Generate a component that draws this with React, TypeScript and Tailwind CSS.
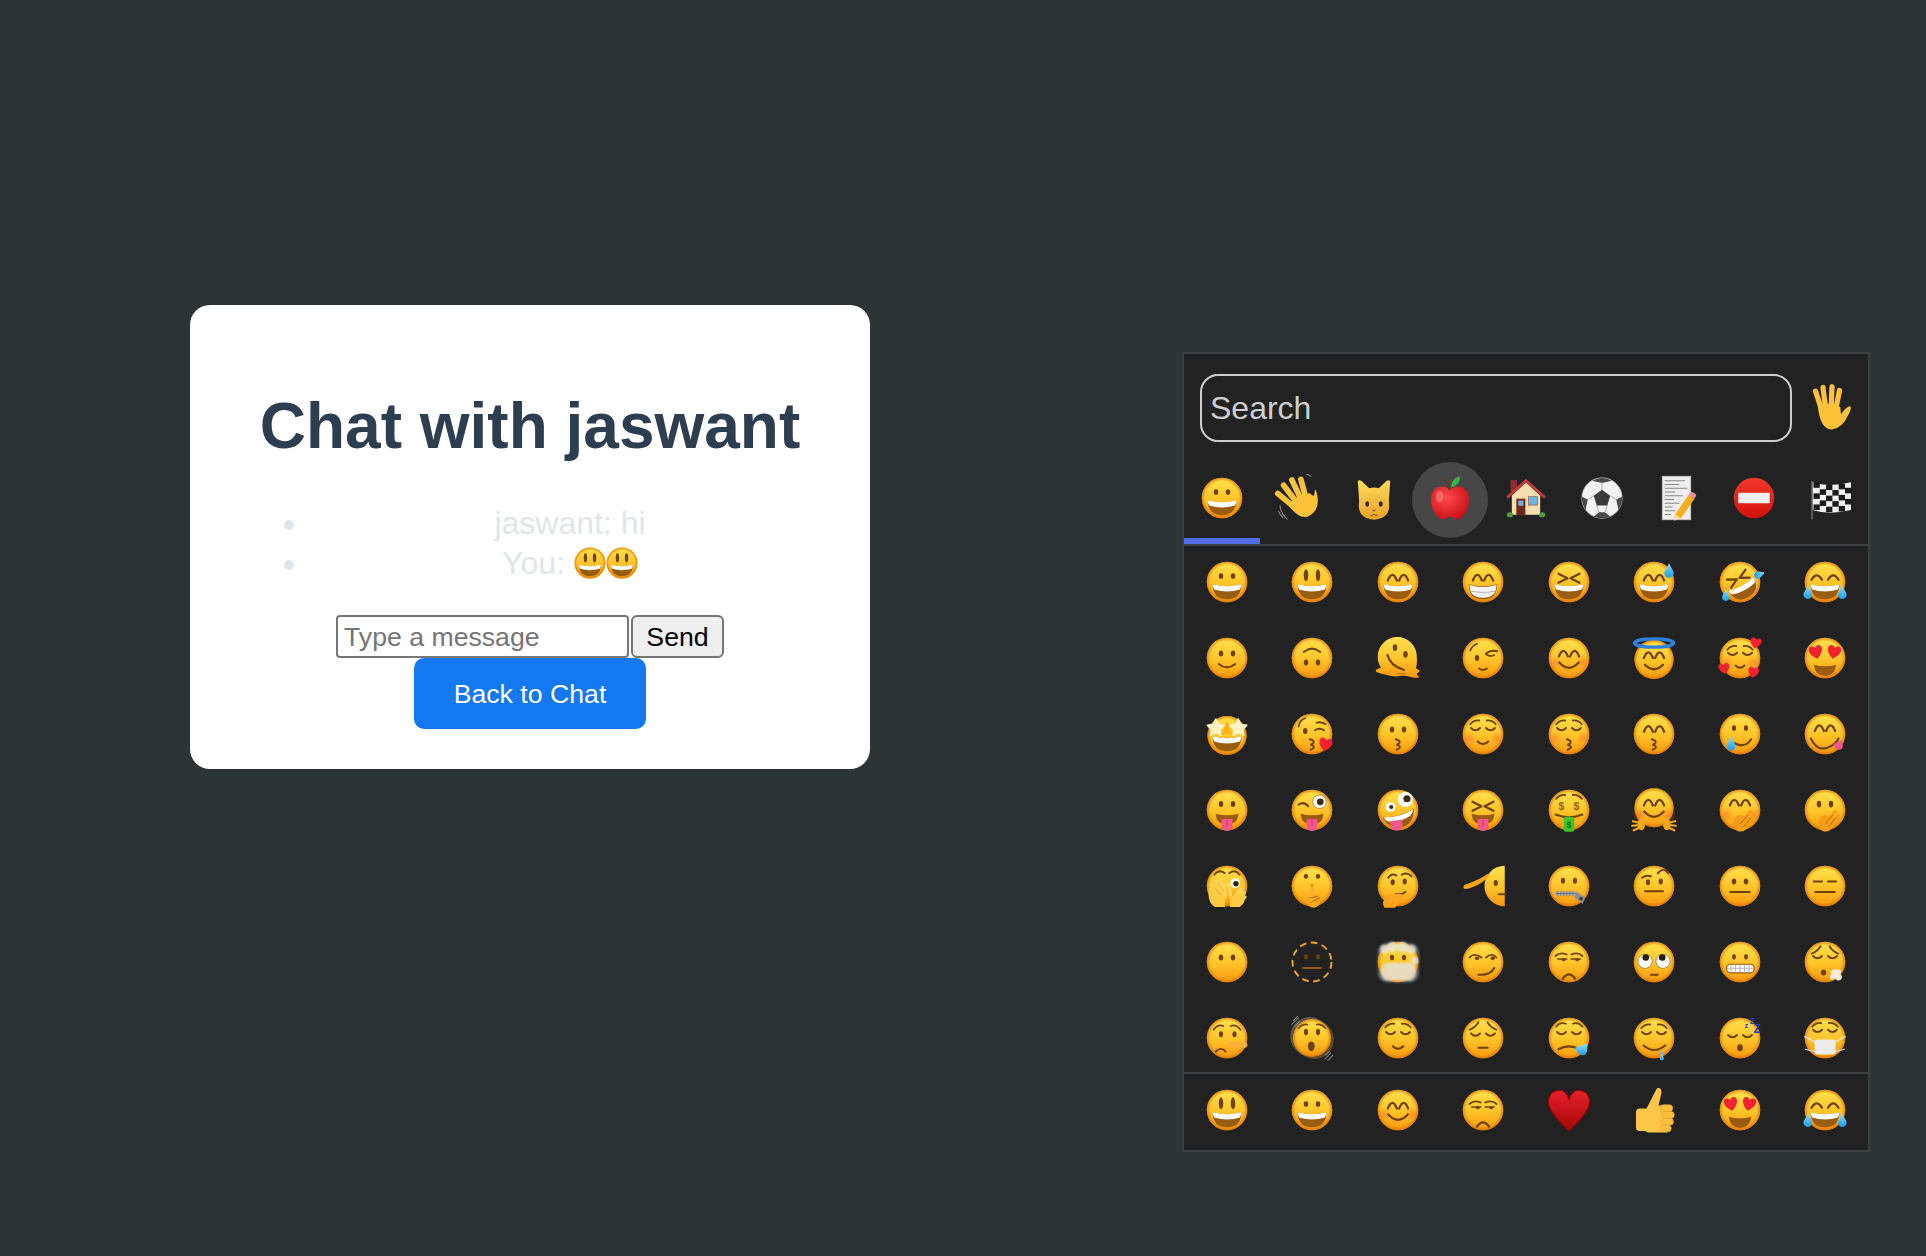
import type { ReactNode } from "react";

const B = "#6f4208";
const M = "#9a5c10";

const P = (d: string, w = 3, c = B) => (
  <path d={d} fill="none" stroke={c} strokeWidth={w} strokeLinecap="round" strokeLinejoin="round" />
);
const Fl = (d: string, c: string) => <path d={d} fill={c} />;
const Ov = (cx: number, cy: number, rx: number, ry: number, c = B) => <ellipse cx={cx} cy={cy} rx={rx} ry={ry} fill={c} />;

const faceAt = (cy: number, r: number) => (
  <>
    <circle cx="32" cy={cy} r={r} fill="url(#ef)" />
    <circle cx="32" cy={cy} r={r} fill="url(#er)" />
  </>
);
const face = faceAt(32, 27);
const eyes = (y = 26, ry = 4, rx = 3) => (
  <>
    {Ov(24, y, rx, ry)}
    {Ov(40, y, rx, ry)}
  </>
);
const arcs = (y = 30) => (
  <>
    {P(`M18.5 ${y}Q24.5 ${y - 15} 30.5 ${y}`)}
    {P(`M33.5 ${y}Q39.5 ${y - 15} 45.5 ${y}`)}
  </>
);
const closed = (y = 27) => (
  <>
    {P(`M16 ${y}Q22 ${y + 6} 28 ${y}`, 2.6)}
    {P(`M36 ${y}Q42 ${y + 6} 48 ${y}`, 2.6)}
  </>
);
const brows = (y = 15) => (
  <>
    {P(`M15 ${y + 4}Q20 ${y - 2} 27 ${y - 1}`, 2.4)}
    {P(`M49 ${y + 4}Q44 ${y - 2} 37 ${y - 1}`, 2.4)}
  </>
);
const sadBrows = (
  <>
    {P("M14 21Q22 18 26 11", 2.4)}
    {P("M50 21Q42 18 38 11", 2.4)}
  </>
);
const xeyes = (
  <>
    {P("M18 21L30 27L18 33", 3)}
    {P("M46 21L34 27L46 33", 3)}
  </>
);
const open = (
  <>
    {Fl("M13 35Q32 40 51 35Q51 55 32 55Q13 55 13 35Z", M)}
    {Fl("M13 35Q32 40 51 35Q51 40 49 42Q32 47 15 42Q13 40 13 35Z", "#fff")}
  </>
);
const smile = P("M19 38Q32 52 45 38", 3);
const line = P("M19 40H45", 2.8);
const kiss = P("M29 39Q37 41 33 45Q29 46 32 47Q38 50 30 53", 2.6);
const Drop = (x: number, y: number, s = 1) => (
  <path d={`M${x} ${y - 10 * s}C${x + 3 * s} ${y - 3 * s} ${x + 6 * s} ${y} ${x + 6 * s} ${y + 3 * s}A${6 * s} ${6 * s} 0 0 1 ${x - 6 * s} ${y + 3 * s}C${x - 6 * s} ${y} ${x - 3 * s} ${y - 3 * s} ${x} ${y - 10 * s}Z`} fill="url(#ed)" />
);
const Ht = (x: number, y: number, s = 1, r = 0, c = "#f1222f") => (
  <path transform={`translate(${x} ${y}) rotate(${r}) scale(${s})`} d="M0 6.5C-9 0 -6.8 -6 -3 -6C-1.4 -6 -.5 -5 0 -3.8C.5 -5 1.4 -6 3 -6C6.8 -6 9 0 0 6.5Z" fill={c} />
);
const blush = (
  <>
    <circle cx="13" cy="38" r="10" fill="url(#eb)" />
    <circle cx="51" cy="38" r="10" fill="url(#eb)" />
  </>
);
const tongue = (
  <>
    {Fl("M17 37Q32 41 47 37Q47 51 32 51Q17 51 17 37Z", M)}
    {Fl("M25 44H39V53A7 7 0 0 1 25 53Z", "#f2568f")}
    {P("M32 45V53", 1.2, "#c92f68")}
  </>
);
const wrist = "#f9a61e";
const fingers = (pts: number[][], w = 5, c = wrist) => (
  <g stroke={c} strokeWidth={w} strokeLinecap="round">
    {pts.map((p, i) => (
      <line key={i} x1={p[0]} y1={p[1]} x2={p[2]} y2={p[3]} />
    ))}
  </g>
);
const star = (cx: number, cy: number, r: number) => {
  const pts: string[] = [];
  for (let i = 0; i < 10; i++) {
    const a = (Math.PI / 5) * i - Math.PI / 2;
    const rr = i % 2 ? r * 0.5 : r;
    pts.push(`${(cx + rr * Math.cos(a)).toFixed(1)},${(cy + rr * Math.sin(a)).toFixed(1)}`);
  }
  return <polygon points={pts.join(" ")} fill="#fff3c4" stroke="#fff3c4" strokeWidth="2" strokeLinejoin="round" />;
};

const handFingers = (
  <>
    {fingers([[20, 36, 11, 14], [27, 32, 23, 8], [35, 32, 36, 7], [42, 34, 47, 12]], 7.5, "#ffc23a")}
    <path d="M16 34Q32 26 49 34Q51 44 56 34Q60 30 56 42Q50 60 34 60Q20 60 16 34Z" fill="#ffc23a" />
  </>
);

const flagCells: ReactNode[] = [];
for (let c = 0; c < 6; c++) {
  for (let r = 0; r < 5; r++) {
    if ((c + r) % 2 === 0) {
      const off = c === 0 || c === 5 ? 0 : c === 1 || c === 4 ? 2 : 3;
      flagCells.push(<rect key={`${c}-${r}`} x={10 + c * 8.4} y={11 + off + r * 7.4} width="8.4" height="7.4" />);
    }
  }
}

const EMOJI: Record<string, ReactNode> = {
  grin: <>{face}{eyes(24, 3.8, 3)}{open}</>,
  smiley: <>{face}{eyes(23, 8, 3)}{open}</>,
  smile4: <>{face}{arcs()}{open}</>,
  beam: (
    <>
      {face}
      {arcs()}
      {Fl("M13 35Q32 40 51 35Q51 55 32 55Q13 55 13 35Z", M)}
      {Fl("M14 36Q32 41 50 36Q50 53 32 53Q14 53 14 36Z", "#f4f4f4")}
      {P("M15 44Q32 48 49 44", 1.2, "#a8a8a8")}
    </>
  ),
  laugh: <>{face}{xeyes}{open}</>,
  sweat: <>{face}{arcs()}{open}{Drop(52, 17, 1.05)}</>,
  rofl: (
    <>
      {face}
      <g transform="rotate(-28 32 32)">
        {xeyes}
        {open}
      </g>
      {Drop(13, 50, 0.8)}
      <g transform="rotate(70 58 22)">{Drop(58, 22, 0.8)}</g>
    </>
  ),
  joy: <>{face}{P("M14 29Q21 17 28 29")}{P("M36 29Q43 17 50 29")}{open}{Drop(9, 46, 0.95)}{Drop(55, 46, 0.95)}</>,
  slight: <>{face}{eyes()}{P("M21 40Q32 49 43 40", 2.6)}</>,
  upside: (
    <>
      {face}
      <g transform="rotate(180 32 32)">
        {eyes()}
        {P("M21 40Q32 49 43 40", 2.6)}
      </g>
    </>
  ),
  melt: (
    <>
      <path d="M5 30A26 26 0 0 1 57 30C58 40 56 44 56 46C62 48 62 50 58 52C56 54 60 56 60 58C50 60 46 54 34 56C26 58 14 54 4 51C0 48 4 47 9 45C7 40 5 38 5 30Z" fill="url(#ef)" />
      {Ov(28, 18, 3, 4.5)}
      {Ov(42, 27, 3, 4.5)}
      {P("M18 28Q21 42 40 48", 3)}
      {P("M32 53H42", 1.2, "#a86a10")}
    </>
  ),
  wink: (
    <>
      {face}
      {P("M15 22Q18 15 24 13", 2.4)}
      {Ov(24, 32, 3, 4)}
      {P("M36 26Q43 21 51 23", 2.8)}
      {P("M36 27Q42 31 47 28", 2.2)}
      {P("M27 46Q32 50 37 46", 2.8)}
    </>
  ),
  blush: <>{face}{blush}{arcs(30)}{smile}</>,
  halo: (
    <>
      {faceAt(34, 26)}
      {arcs(32)}
      {P("M20 41Q32 53 44 41", 3)}
      <ellipse cx="32" cy="12" rx="26" ry="5.5" fill="none" stroke="#2f7fe0" strokeWidth="4.6" />
    </>
  ),
  hearts: (
    <>
      {face}
      {blush}
      {brows(17)}
      {closed(25)}
      {P("M26 42Q32 48 38 42", 2.6)}
      {Ht(53, 12, 1.15, 12)}
      {Ht(11, 46, 1.15, -10)}
      {Ht(50, 51, 1.15, 10)}
    </>
  ),
  hearteyes: (
    <>
      {face}
      {Fl("M17 41Q32 45 47 41Q45 56 32 56Q19 56 17 41Z", M)}
      {Ht(20, 24, 1.4, -12)}
      {Ht(44, 24, 1.4, 12)}
    </>
  ),
  star: (
    <>
      {faceAt(34, 26)}
      {open}
      {star(17, 24, 12)}
      {star(47, 24, 12)}
      {Fl("M32 15C28 24 28 28 23 33C32 31 41 33 41 33C36 28 36 24 32 15Z", "#f7b21a")}
    </>
  ),
  kissheart: (
    <>
      {face}
      {P("M14 22Q16 13 23 11", 2.4)}
      {Ov(23, 28, 3, 4)}
      {P("M36 27Q42 23 48 27", 2.6)}
      {P("M38 17Q44 15 50 19", 2.4)}
      {kiss}
      {Ht(50, 46, 1.4, 12)}
    </>
  ),
  kiss: <>{face}{eyes(26, 4, 3)}{kiss}</>,
  relaxed: (
    <>
      {face}
      {blush}
      {brows(15)}
      {closed(24)}
      {P("M25 42Q32 49 39 42", 2.8)}
    </>
  ),
  kissclosed: <>{face}{blush}{brows(15)}{closed(24)}{kiss}</>,
  kissarc: <>{face}{arcs(29)}{kiss}</>,
  tearsmile: (
    <>
      {face}
      {eyes(24, 3.8, 2.8)}
      {P("M24 44Q38 52 47 39", 2.8)}
      {Drop(20, 45, 1)}
    </>
  ),
  yum: (
    <>
      {face}
      {arcs(28)}
      {P("M13 38Q22 56 36 50Q46 46 50 38", 2.8)}
      {Fl("M43 46L53 40Q58 46 54 52Q47 56 43 46Z", "#f2568f")}
    </>
  ),
  tongue: <>{face}{eyes(24)}{tongue}</>,
  tonguewink: (
    <>
      {face}
      {P("M14 25Q21 20 27 27", 2.8)}
      <circle cx="42" cy="21" r="9" fill="#fff" stroke="#b58d4a" strokeWidth="1.2" />
      <circle cx="43" cy="21" r="4.5" fill="#3a2a14" />
      {tongue}
    </>
  ),
  zany: (
    <>
      {face}
      <circle cx="22" cy="28" r="6.5" fill="#fff" />
      <circle cx="23" cy="28" r="2.8" fill="#3a2a14" />
      <circle cx="42" cy="18" r="10" fill="#fff" />
      <circle cx="44" cy="17" r="4.8" fill="#3a2a14" />
      {Fl("M11 42Q36 42 53 30Q54 48 40 54Q22 60 11 42Z", M)}
      {Fl("M13 42Q36 42 52 31Q52 36 48 40Q32 50 18 47Q14 45 13 42Z", "#fff")}
      {Fl("M21 47L37 45L38 53A8 8 0 0 1 23 55Z", "#f2568f")}
    </>
  ),
  xtongue: <>{face}{xeyes}{tongue}</>,
  money: (
    <>
      {face}
      {brows(13)}
      <text x="22" y="32" fontSize="14" fontWeight="700" textAnchor="middle" fill="#8f6410" fontFamily="Liberation Sans, sans-serif">$</text>
      <text x="42" y="32" fontSize="14" fontWeight="700" textAnchor="middle" fill="#8f6410" fontFamily="Liberation Sans, sans-serif">$</text>
      {P("M14 38Q32 45 50 38", 2.6)}
      <rect x="25" y="41" width="14" height="20" rx="3" fill="#3cc62c" />
      <text x="32" y="56" fontSize="12" fontWeight="700" textAnchor="middle" fill="#0d6d12" fontFamily="Liberation Sans, sans-serif">$</text>
    </>
  ),
  hug: (
    <>
      {faceAt(29, 26)}
      {blush}
      {arcs(26)}
      {P("M19 34Q32 48 45 34", 3)}
      {fingers([[12, 49, 4, 47], [13, 52, 3, 53], [14, 55, 5, 59]], 3, "#f6a81d")}
      {fingers([[52, 49, 60, 47], [51, 52, 61, 53], [50, 55, 59, 59]], 3, "#f6a81d")}
      <ellipse cx="15" cy="51" rx="5" ry="8" fill="#f6a81d" />
      <ellipse cx="49" cy="51" rx="5" ry="8" fill="#f6a81d" />
    </>
  ),
  handmouth: (
    <>
      {face}
      {blush}
      {arcs(26)}
      {fingers([[28, 56, 46, 34], [32, 57, 50, 39], [36, 58, 52, 44]], 4.4, "#f59c18")}
      <ellipse cx="32" cy="50" rx="9" ry="11" fill="#f59c18" />
      {P("M42 39L33 50M46 43L37 54", 1.2, "#b5680a")}
    </>
  ),
  handmouth2: (
    <>
      {face}
      {eyes(24, 4.5, 3)}
      {fingers([[28, 56, 46, 34], [32, 57, 50, 39], [36, 58, 52, 44]], 4.4, "#f59c18")}
      <ellipse cx="32" cy="50" rx="9" ry="11" fill="#f59c18" />
      {P("M42 39L33 50M46 43L37 54", 1.2, "#b5680a")}
    </>
  ),
  peek: (
    <>
      {face}
      {P("M15 17Q22 9 29 15M35 15Q42 9 49 17", 2.4)}
      <circle cx="43" cy="28" r="6.5" fill="#fff" />
      <circle cx="44" cy="29" r="3.6" fill="#2d2010" />
      {fingers([[27, 46, 11, 30], [29, 44, 17, 25], [30, 44, 23, 24], [30, 46, 28, 30]], 4.4, "#ffd75a")}
      {fingers([[37, 46, 34, 30], [39, 47, 53, 35], [41, 49, 55, 41], [40, 51, 56, 47]], 4.4, "#ffd75a")}
      <path d="M8 34Q20 36 30 46L29 60H16Q5 54 8 34Z" fill="#ffcb45" />
      <path d="M56 42Q44 40 36 46L36 60H49Q58 54 56 42Z" fill="#ffcb45" />
      {P("M14 33L24 43M20 28L28 40M44 40L38 46", 1, "#d89318")}
    </>
  ),
  shush: (
    <>
      {face}
      {eyes(19, 3.4, 2.8)}
      <ellipse cx="34" cy="52" rx="9" ry="9" fill="#f7a51d" />
      {fingers([[32, 54, 32, 34]], 6, "#f9b02a")}
      {P("M29 48L39 46M30 54L42 48", 1.2, "#b5680a")}
      {P("M32 30V32", 1.2, "#8a4a0c")}
    </>
  ),
  think: (
    <>
      {face}
      {P("M19 21Q23 14 30 18", 2.6)}
      {P("M37 17Q44 13 50 19", 2.6)}
      {Ov(25, 27, 2.8, 4)}
      {Ov(41, 26, 2.8, 4)}
      {P("M29 43Q37 44 42 40", 2.8)}
      <path d="M14 61Q10 54 14 50L19 45Q34 40 38 44Q40 47 35 49L28 50Q36 51 33 54L28 61Z" fill="#f9a61e" />
    </>
  ),
  salute: (
    <>
      <path d="M61 5A27 27 0 0 0 61 59Z" fill="url(#ef)" />
      {Ov(49, 28, 2.8, 4)}
      {P("M53 43H61", 2.8)}
      <path d="M6 35Q5 30 12 29Q28 23 38 16L41 18Q32 29 14 35Q8 37 6 35Z" fill="#f7a51d" />
    </>
  ),
  zip: (
    <>
      {face}
      {eyes(25, 4, 2.8)}
      {P("M15 42H42", 5.5, "#a9a9a9")}
      {P("M15 42H42", 1, "#6a6a6a")}
      {P("M17 39V45M21 39V45M25 39V45M29 39V45M33 39V45M37 39V45", 0.9, "#6a6a6a")}
      <path d="M42 40L54 47L50 56L39 47Z" fill="#8d8d8d" />
      <circle cx="48" cy="49" r="2.2" fill="#333" />
    </>
  ),
  raised: (
    <>
      {face}
      {P("M16 21Q21 17 28 19", 2.6)}
      {P("M37 15Q45 6 51 15", 2.6)}
      {Ov(24, 27, 2.8, 4)}
      {Ov(41, 26, 2.8, 4)}
      {P("M20 39H44", 2.6)}
    </>
  ),
  neutral: <>{face}{eyes()}{line}</>,
  flat: (
    <>
      {face}
      {P("M17 26H28M36 26H47", 2.6)}
      {line}
    </>
  ),
  nomouth: <>{face}{eyes()}</>,
  dotted: (
    <>
      <circle cx="32" cy="32" r="26" fill="none" stroke="#e8a52a" strokeWidth="2.6" strokeDasharray="9 6" />
      {eyes(25, 3.6, 2.6)}
      {P("M20 40H44", 2, "#b56d12")}
    </>
  ),
  cloud: (
    <>
      <rect x="5" y="7" width="55" height="52" rx="12" fill="#8f979c" opacity="0.55" filter="url(#ez)" />
      {face}
      <g filter="url(#ey)" fill="#e4e6e2" opacity="0.82">
        <circle cx="14" cy="15" r="6" />
        <circle cx="24" cy="12" r="7" />
        <circle cx="38" cy="12" r="7" />
        <circle cx="50" cy="15" r="6" />
        <rect x="9" y="33" width="47" height="24" rx="10" />
        <circle cx="54" cy="30" r="5" />
      </g>
      {eyes(26, 3.6, 2.8)}
    </>
  ),
  smirk: (
    <>
      {face}
      {P("M14 26Q20 19 30 26", 2.4)}
      {P("M36 26Q44 19 50 26", 2.4)}
      {Ov(24, 27, 3, 2.4)}
      {Ov(45, 27, 3, 2.4)}
      {P("M26 49Q42 50 47 40", 2.8)}
    </>
  ),
  unamused: (
    <>
      {face}
      {P("M14 24Q20 18 29 22", 2.4)}
      {P("M35 22Q44 18 50 24", 2.4)}
      {P("M17 28H29", 2.2)}
      {P("M35 28H47", 2.2)}
      {Ov(25, 29, 2.6, 2)}
      {Ov(43, 29, 2.6, 2)}
      {P("M24 54Q32 43 40 54", 3)}
    </>
  ),
  roll: (
    <>
      {face}
      <circle cx="20" cy="31" r="9.5" fill="#fff" stroke="#9a6a1e" strokeWidth="1" />
      <circle cx="44" cy="31" r="9.5" fill="#fff" stroke="#9a6a1e" strokeWidth="1" />
      <circle cx="21" cy="26" r="4.4" fill="#2a1e10" />
      <circle cx="43" cy="26" r="4.4" fill="#2a1e10" />
      {P("M28 49H37", 2.6)}
    </>
  ),
  grimace: (
    <>
      {face}
      {eyes(25, 3.6, 2.6)}
      <rect x="14" y="35" width="37" height="11.5" rx="5.5" fill="#f4f4f4" stroke={M} strokeWidth="1.6" />
      {P("M15 40.5H50M20 36V46M26 36V46M32 36V46M38 36V46M44 36V46", 0.8, "#a0a0a0")}
    </>
  ),
  exhale: (
    <>
      {face}
      {sadBrows}
      {closed(24)}
      {Ov(30, 46, 3.5, 4)}
      <g fill="#f5ead2">
        <circle cx="45" cy="47" r="5.5" />
        <circle cx="50" cy="52" r="4.5" />
        <circle cx="42" cy="52" r="3.5" />
        <circle cx="50" cy="45" r="3.5" />
      </g>
    </>
  ),
  lying: (
    <>
      {face}
      {P("M14 21Q20 13 27 16", 2.4)}
      {P("M37 16Q44 13 50 21", 2.4)}
      {Ov(24, 27, 2.8, 4)}
      {Ov(42, 27, 2.8, 4)}
      {P("M17 50Q24 43 30 50", 2.6)}
      <path d="M34 37L57 38Q62 41 57 45L36 45Q30 41 34 37Z" fill="#f9b03a" />
    </>
  ),
  shake: (
    <>
      <circle cx="29" cy="30" r="26" fill="#8a7b55" opacity="0.6" />
      <circle cx="35" cy="34" r="26" fill="#8a6a2a" opacity="0.6" />
      {faceAt(32, 25)}
      {eyes(24, 4.2, 2.8)}
      {P("M14 19Q19 13 26 14M38 14Q45 13 50 19", 2.2)}
      {Ov(31, 43, 4.6, 6.5)}
      {P("M7 9L13 3M5 14L14 5M9 17L15 10", 1.4, "#8c8c8c")}
      {P("M49 60L57 52M53 62L60 55M50 55L55 50", 1.4, "#8c8c8c")}
    </>
  ),
  relieved: (
    <>
      {face}
      {brows(14)}
      {closed(24)}
      {P("M25 43Q32 50 39 43", 2.8)}
    </>
  ),
  pensive: (
    <>
      {face}
      {sadBrows}
      {closed(26)}
      {P("M26 45H38", 2.8)}
    </>
  ),
  sleepy: (
    <>
      {face}
      {P("M15 17Q20 10 28 13M37 13Q44 10 50 17", 2.2)}
      {closed(24)}
      {P("M18 47Q30 40 44 46", 3)}
      <path d="M40 45Q50 41 56 40Q58 52 52 55Q44 56 40 45Z" fill="url(#ed)" />
    </>
  ),
  drool: (
    <>
      {face}
      {brows(15)}
      {closed(24)}
      {P("M18 42Q32 54 47 42", 2.8)}
      {Fl("M41 50H44V60H41Z", "#5ac6ef")}
      {Drop(42.5, 58, 0.45)}
    </>
  ),
  sleep: (
    <>
      {face}
      {closed(28)}
      {Ov(32, 45, 3.8, 4.6)}
      <text x="38" y="18" fontSize="10" fontWeight="700" fill="#1d45c8" fontFamily="Liberation Sans, sans-serif">z</text>
      <text x="45" y="13" fontSize="11" fontWeight="700" fill="#1d45c8" fontFamily="Liberation Sans, sans-serif">Z</text>
      <text x="50" y="25" fontSize="16" fontWeight="700" fill="#1d45c8" fontFamily="Liberation Sans, sans-serif">Z</text>
    </>
  ),
  mask: (
    <>
      {face}
      {brows(13)}
      {closed(21)}
      <path d="M21 34H43Q46 34 46 37V51Q46 54 43 54H21Q18 54 18 51V37Q18 34 21 34Z" fill="#ececec" />
      {P("M18 37L5 30M18 50L6 47M46 37L59 30M46 50L58 47", 1.6, "#eeeeee")}
    </>
  ),
  heart: (
    <>
      <path d="M32 60C4 34 2 22 6 14C9 6 22 3 27 9C29 11 31 14 32 18C33 14 35 11 37 9C42 3 55 6 58 14C62 22 60 34 32 60Z" fill="url(#eh)" stroke="#8a0505" strokeWidth="1.4" />
    </>
  ),
  thumbs: (
    <>
      <path d="M13 30H22V60H13Q8 60 8 55V35Q8 30 13 30Z" fill="#ffc74a" />
      <path d="M22 30L36 3Q42 1 42 9L38 26H50V62H25Q20 62 20 56V32Z" fill="#ffc74a" />
      <rect x="40" y="25" width="17" height="9" rx="4.5" fill="#ffbf3a" stroke="#e8a02a" strokeWidth="0.8" />
      <rect x="42" y="34" width="17" height="9" rx="4.5" fill="#ffbf3a" stroke="#e8a02a" strokeWidth="0.8" />
      <rect x="42" y="43" width="16" height="9" rx="4.5" fill="#ffbf3a" stroke="#e8a02a" strokeWidth="0.8" />
      <rect x="40" y="52" width="15" height="9" rx="4.5" fill="#ffbf3a" stroke="#e8a02a" strokeWidth="0.8" />
    </>
  ),
  wave: (
    <g transform="rotate(-28 32 32)">
      {handFingers}
      {P("M6 30Q2 40 6 50M1 36Q0 40 2 46", 1.4, "#8c8c8c")}
      {P("M52 5Q58 8 60 14", 1.4, "#8c8c8c")}
    </g>
  ),
  hand: (
    <>
      {fingers([[21, 32, 14, 11], [27, 30, 24, 6], [35, 30, 36, 5], [42, 30, 46, 10]], 7, "#ffc23a")}
      <path d="M17 30Q31 24 47 32L48 42Q54 32 60 31Q63 33 58 42Q50 60 36 62Q20 62 17 30Z" fill="#ffc23a" />
    </>
  ),
  cat: (
    <g transform="translate(32 2) scale(0.9 0.95) translate(-32 0)">
      <path d="M10 36L8 8Q10 5 14 8L25 18Q32 16 39 18L50 8Q54 5 56 8L54 36Q58 60 32 62Q6 60 10 36Z" fill="url(#ec)" />
      {Ov(22, 40, 3, 3.8, "#3a2a14")}
      {Ov(42, 40, 3, 3.8, "#3a2a14")}
      {Fl("M29 48H35L32 51Z", "#8a4a2a")}
      {P("M27 56Q30 57 32 54Q34 57 37 56", 1.2, "#5a3208")}
    </g>
  ),
  apple: (
    <>
      <path d="M32 21C26 14 8 14 7 32C6 48 16 62 24 60C28 59 30 57 32 57C34 57 36 59 40 60C48 62 58 48 57 32C56 14 38 14 32 21Z" fill="url(#ea)" />
      {P("M31 21Q30 12 25 8", 2, "#6b3a12")}
      <path d="M33 18Q34 6 45 3Q47 14 33 18Z" fill="#39b54a" />
      <ellipse cx="18" cy="30" rx="5" ry="8" fill="#fff" opacity="0.22" />
    </>
  ),
  house: (
    <g transform="translate(32 32) scale(0.86) translate(-32 -32)">
      <rect x="8" y="4" width="10" height="18" fill="#8e2f2f" />
      <path d="M10 58V28L32 8L54 28V58Z" fill="#f5deb0" />
      {P("M4 30L32 5L60 30", 4.4, "#c4393a")}
      <rect x="17" y="33" width="14" height="26" fill="#6b2a1e" />
      <rect x="20" y="36" width="8" height="8" fill="#6fb4dc" />
      <rect x="36" y="30" width="14" height="13" fill="#6fb4dc" stroke="#8f6f4a" strokeWidth="1.2" />
      <ellipse cx="7" cy="58" rx="5" ry="4" fill="#4f9a3a" />
      <ellipse cx="57" cy="58" rx="5" ry="4" fill="#4f9a3a" />
    </g>
  ),
  ball: (
    <>
      <circle cx="32" cy="32" r="27" fill="#f2f2f2" stroke="#a9a9a9" strokeWidth="1" />
      <path d="M32 21L43 29L39 42H25L21 29Z" fill="#3a3a3a" />
      <path d="M32 5Q24 6 19 9L32 12L45 9Q40 6 32 5ZM5 30Q5 40 10 48L13 34ZM59 30Q59 40 54 48L51 34ZM21 57Q32 61 43 57L36 51H28Z" fill="#4a4a4a" />
      {P("M32 12V21M21 29L13 34M43 29L51 34M25 42L28 51M39 42L36 51", 1, "#9a9a9a")}
    </>
  ),
  memo: (
    <>
      <rect x="11" y="3" width="38" height="58" fill="#eeeeee" stroke="#c8c8c8" strokeWidth="1" />
      {P("M15 9H41M15 14H33M15 19H44M15 24H28M15 29H38M15 34H26M15 39H33M15 44H24M15 49H28M15 54H22", 0.9, "#555")}
      <path d="M28 54L46 28L54 33L36 59L27 62Z" fill="#f6b01e" />
      <path d="M46 28L48 25Q50 23 53 25L56 27Q57 29 55 31L54 33Z" fill="#ec8f9b" />
      <path d="M28 54L27 62L36 59Z" fill="#f7dcb0" />
    </>
  ),
  noentry: (
    <>
      <circle cx="32" cy="32" r="27" fill="url(#en)" />
      <rect x="11" y="25" width="42" height="14" rx="1" fill="#f0f0f0" />
    </>
  ),
  flag: (
    <>
      {P("M8 10V60", 1.4, "#8a8a8a")}
      <path d="M9 11Q30 18 60 11V48Q30 55 9 48Z" fill="#f1f1f1" />
      <g fill="#1b1b1b">{flagCells}</g>
    </>
  ),
};

const GRID = [
  "grin", "smiley", "smile4", "beam", "laugh", "sweat", "rofl", "joy",
  "slight", "upside", "melt", "wink", "blush", "halo", "hearts", "hearteyes",
  "star", "kissheart", "kiss", "relaxed", "kissclosed", "kissarc", "tearsmile", "yum",
  "tongue", "tonguewink", "zany", "xtongue", "money", "hug", "handmouth", "handmouth2",
  "peek", "shush", "think", "salute", "zip", "raised", "neutral", "flat",
  "nomouth", "dotted", "cloud", "smirk", "unamused", "roll", "grimace", "exhale",
  "lying", "shake", "relieved", "pensive", "sleepy", "drool", "sleep", "mask",
];
const CATS = ["grin", "wave", "cat", "apple", "house", "ball", "memo", "noentry", "flag"];
const RECENT = ["smiley", "grin", "blush", "unamused", "heart", "thumbs", "hearteyes", "joy"];

function Emoji({ name }: { name: string }) {
  return (
    <svg viewBox="0 0 64 64" className="block w-[48px] h-[48px]">
      {EMOJI[name]}
    </svg>
  );
}

function InlineEmoji({ name }: { name: string }) {
  return (
    <svg viewBox="4 4 56 56" className="inline-block align-[-5px] w-[32px] h-[32px]">
      {EMOJI[name]}
    </svg>
  );
}

function Defs() {
  return (
    <svg className="absolute w-0 h-0" aria-hidden="true">
      <defs>
        <linearGradient id="ef" x1="0" y1="0" x2="0" y2="1">
          <stop offset="0" stopColor="#ffe24f" />
          <stop offset="0.55" stopColor="#ffc328" />
          <stop offset="1" stopColor="#f7960f" />
        </linearGradient>
        <radialGradient id="er">
          <stop offset="0.82" stopColor="#e07a00" stopOpacity="0" />
          <stop offset="1" stopColor="#d96f00" stopOpacity="0.75" />
        </radialGradient>
        <linearGradient id="ec" x1="0" y1="0" x2="0" y2="1">
          <stop offset="0" stopColor="#ffd95a" />
          <stop offset="1" stopColor="#e9a52a" />
        </linearGradient>
        <linearGradient id="ed" x1="0" y1="0" x2="0" y2="1">
          <stop offset="0" stopColor="#8fe0fa" />
          <stop offset="1" stopColor="#1d9be8" />
        </linearGradient>
        <radialGradient id="eb">
          <stop offset="0" stopColor="#ff6a2e" stopOpacity="0.5" />
          <stop offset="1" stopColor="#ff6a2e" stopOpacity="0" />
        </radialGradient>
        <linearGradient id="eh" x1="0" y1="0" x2="0" y2="1">
          <stop offset="0" stopColor="#e8202a" />
          <stop offset="1" stopColor="#a30808" />
        </linearGradient>
        <radialGradient id="ea" cx="0.4" cy="0.35" r="0.75">
          <stop offset="0" stopColor="#ff4a4a" />
          <stop offset="1" stopColor="#c60b14" />
        </radialGradient>
        <linearGradient id="en" x1="0" y1="0" x2="0" y2="1">
          <stop offset="0" stopColor="#f2382e" />
          <stop offset="1" stopColor="#d11208" />
        </linearGradient>
        <filter id="ez" x="-20%" y="-20%" width="140%" height="140%">
          <feGaussianBlur stdDeviation="1.5" />
        </filter>
        <filter id="ey" x="-20%" y="-20%" width="140%" height="140%">
          <feGaussianBlur stdDeviation="1.6" />
        </filter>
      </defs>
    </svg>
  );
}

export default function App() {
  return (
    <div className="relative flex items-start h-[1256px] bg-[#2d3436] pl-[190px] font-['Liberation_Sans',Arial,sans-serif]">
      <Defs />
      <div className="mt-[305px] w-[680px] h-[464px] rounded-[20px] bg-white pt-[84px] text-center">
        <h1 className="text-[64px] leading-[74px] font-bold text-[#2c3e50]">Chat with jaswant</h1>
        <ul className="mt-[40px] list-disc pl-[120px] pr-[40px] text-[32px] leading-[40px] text-[#dfe6e9]">
          <li>jaswant: hi</li>
          <li>
            You: <InlineEmoji name="smiley" />
            <InlineEmoji name="smiley" />
          </li>
        </ul>
        <div className="mt-[32px] flex justify-center gap-[2px]">
          <input
            placeholder="Type a message"
            className="w-[293px] h-[43px] rounded-[4px] border-2 border-[#767676] bg-white px-[6px] pt-[1px] text-[26.67px] text-black placeholder:text-[#757575]"
          />
          <button className="w-[93px] h-[43px] rounded-[6px] border-2 border-[#767676] bg-[#efefef] text-[26.67px] text-black">
            Send
          </button>
        </div>
        <button className="block mx-auto w-[232px] h-[71px] rounded-[10px] bg-[#1478f0] text-[26.67px] text-white">
          Back to Chat
        </button>
      </div>

      <div className="ml-[312px] mt-[352px] w-[688px] h-[800px] border-2 border-[#3c3f41] bg-[#222222] flex flex-col">
        <div className="flex items-center pl-[16px] pt-[20px]">
          <div className="w-[592px] h-[68px] rounded-[18px] border-2 border-[#cfcfcf] px-[8px] text-[32px] leading-[64px] text-[#cfcfcf]">
            Search
          </div>
          <div className="flex-1 flex justify-center pr-[3px] -mt-[2px]">
            <Emoji name="hand" />
          </div>
        </div>
        <div className="mt-[20px] flex">
          {CATS.map((c) => (
            <div
              key={c}
              className={
                c === "apple"
                  ? "w-[76px] h-[76px] pb-[4px] rounded-full bg-[#474747] flex items-center justify-center"
                  : "w-[76px] h-[76px] pb-[4px] flex items-center justify-center"
              }
            >
              <Emoji name={c} />
            </div>
          ))}
        </div>
        <div className="w-[76px] h-[6px] bg-[#4f6ee6]" />
        <div className="h-[2px] bg-[#3c3f41]" />
        <div className="h-[526px] overflow-hidden grid grid-cols-8 auto-rows-[72px] gap-y-[4px]">
          {GRID.map((g, i) => (
            <div key={i} className="flex items-center justify-center">
              <Emoji name={g} />
            </div>
          ))}
        </div>
        <div className="h-[2px] bg-[#3c3f41]" />
        <div className="grid grid-cols-8 h-[76px] pb-[4px]">
          {RECENT.map((g, i) => (
            <div key={i} className="flex items-center justify-center">
              <Emoji name={g} />
            </div>
          ))}
        </div>
      </div>
    </div>
  );
}
